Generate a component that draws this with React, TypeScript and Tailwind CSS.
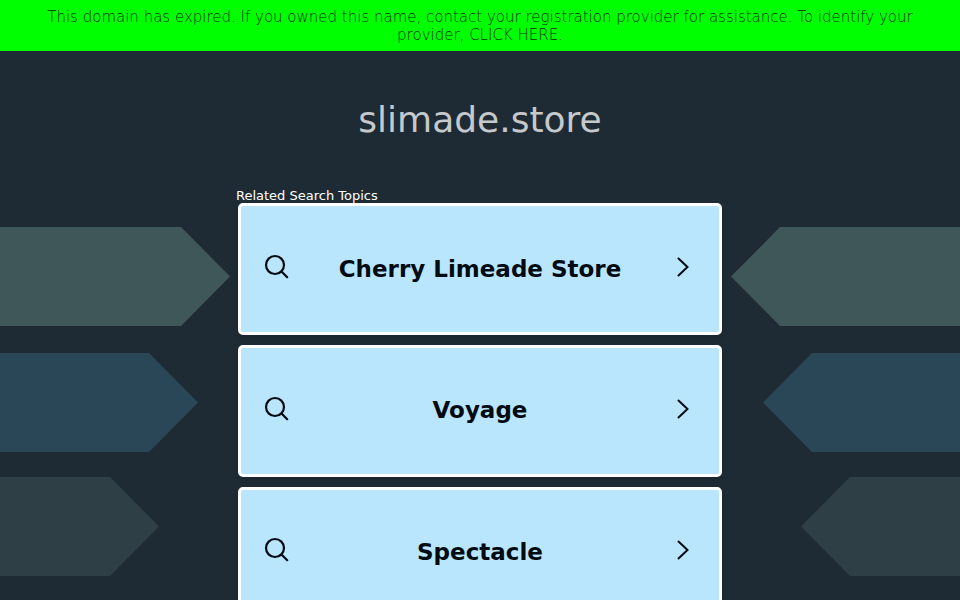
const topics = ["Cherry Limeade Store", "Voyage", "Spectacle"];

const shapes = [
  { top: "top-[227px]", fill: "#3f5759", left: 230, right: 229 },
  { top: "top-[353px]", fill: "#2a4757", left: 198, right: 197 },
  { top: "top-[477px]", fill: "#2e3f46", left: 159, right: 159 },
];

function Arrow({ width, fill, flip, top }: { width: number; fill: string; flip?: boolean; top: string }) {
  return (
    <svg
      width={width}
      height={99}
      viewBox={`0 0 ${width} 99`}
      className={`absolute ${top} ${flip ? "right-0 -scale-x-100" : "left-0"}`}
    >
      <polygon points={`0,0 ${width - 49},0 ${width},49.5 ${width - 49},99 0,99`} fill={fill} />
    </svg>
  );
}

function SearchIcon() {
  return (
    <svg
      width="26"
      height="26"
      viewBox="0 0 26 26"
      fill="none"
      stroke="#020a12"
      strokeWidth="2.2"
      strokeLinecap="round"
      className="-translate-y-[2px] justify-self-start"
    >
      <circle cx="11" cy="11" r="9" />
      <path d="M17.5 17.5 L23.2 23.2" />
    </svg>
  );
}

function ChevronIcon() {
  return (
    <svg
      width="14"
      height="20"
      viewBox="0 0 14 20"
      fill="none"
      stroke="#020a12"
      strokeWidth="2"
      strokeLinecap="round"
      className="mr-[6px] -translate-y-[2px] justify-self-end"
    >
      <path d="M2.5 1.5 L11.5 10 L2.5 18.5" />
    </svg>
  );
}

export default function App() {
  return (
    <div className="relative h-[600px] w-[960px] overflow-hidden bg-[#1f2b34] font-['DejaVu_Sans',sans-serif]">
      {/* Background arrows */}
      {shapes.map((s) => (
        <Arrow key={s.top} top={s.top} width={s.left} fill={s.fill} />
      ))}
      {shapes.map((s) => (
        <Arrow key={s.top} top={s.top} width={s.right} fill={s.fill} flip />
      ))}

      {/* Expired banner */}
      <div className="relative h-[51px] bg-[#00ff00] px-[40px] pt-2 text-center text-[15px] leading-[18px] font-light text-[#003000]">
        This domain has expired. If you owned this name, contact your registration provider for assistance. To identify your provider, CLICK HERE.
      </div>

      <div className="relative flex flex-col items-center">
        <h1 className="mt-[43px] text-center text-[36px] leading-[52px] font-normal text-[#c5c9cc]">slimade.store</h1>

        <div className="mt-[41px] w-[484px]">
          <div className="-ml-[2px] h-[16px] text-[13px] leading-[18px] text-white">Related Search Topics</div>
          <div className="flex flex-col gap-[10px]">
            {topics.map((t) => (
              <div
                key={t}
                className="grid h-[131.8px] shrink-0 grid-cols-[1fr_auto_1fr] items-center rounded-[5px] border-[3px] border-white bg-[#b9e5fd] px-[23px] shadow-md"
              >
                <SearchIcon />
                <span className="text-[23px] font-bold text-[#020a12]">{t}</span>
                <ChevronIcon />
              </div>
            ))}
          </div>
        </div>
      </div>
    </div>
  );
}
